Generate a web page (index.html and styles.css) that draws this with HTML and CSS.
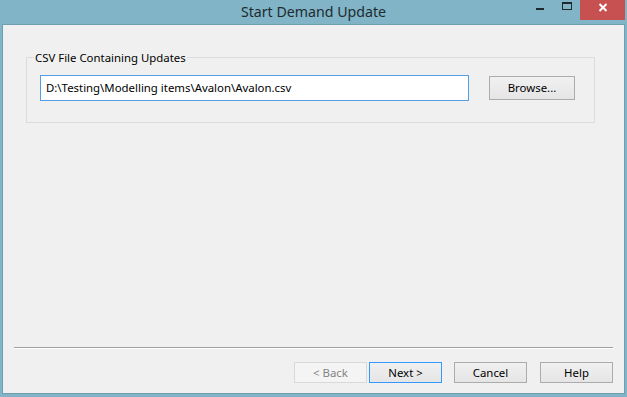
FILE: index.html
```html
<!DOCTYPE html>
<html>
<head>
<meta charset="utf-8">
<title>Start Demand Update</title>
<link rel="stylesheet" href="styles.css">
</head>
<body>
<div class="window">
  <div class="titlebar">
    <div class="title">Start Demand Update</div>
    <div class="controls">
      <div class="ctl min"><svg width="27" height="20" viewBox="0 0 27 20"><rect x="9" y="8" width="8" height="2" fill="#1e2a2e"/></svg></div>
      <div class="ctl max"><svg width="26" height="20" viewBox="0 0 26 20"><rect x="8" y="2" width="10" height="2" fill="#1e2a2e"/><rect x="8.5" y="3.5" width="9" height="6" fill="none" stroke="#1e2a2e" stroke-width="1"/></svg></div>
      <div class="ctl close"><svg width="45" height="20" viewBox="0 0 45 20"><path d="M19.5 4 L26.5 11 M26.5 4 L19.5 11" stroke="#fff" stroke-width="2" fill="none"/></svg></div>
    </div>
  </div>
  <div class="client">
    <div class="group">
      <span class="legend">CSV File Containing Updates</span>
      <div class="row">
        <div class="input">D:\Testing\Modelling items\Avalon\Avalon.csv</div>
        <div class="btn browse">Browse...</div>
      </div>
    </div>
    <div class="spacer"></div>
    <div class="sep"></div>
    <div class="buttons">
      <div class="btn disabled">&lt; Back</div>
      <div class="btn default next">Next &gt;</div>
      <div class="btn cancel">Cancel</div>
      <div class="btn help">Help</div>
    </div>
  </div>
</div>
</body>
</html>
```

FILE: styles.css
```css
* { box-sizing: border-box; }
html, body { margin: 0; padding: 0; }
body {
  font-family: "Noto Sans", "Open Sans", sans-serif;
  font-size: 11.4px;
  color: #000;
  background: #80b4c6;
}
.window {
  width: 627px;
  height: 397px;
  background: #80b4c6;
  padding: 0 2px 3px 2px;
  display: flex;
  flex-direction: column;
}
.titlebar {
  height: 24px;
  display: grid;
  grid-template-columns: 1fr auto 1fr;
  align-items: start;
}
.title {
  grid-column: 2;
  font-size: 14.2px;
  line-height: 24px;
  color: #1f2b30;
  white-space: nowrap;
}
.controls {
  grid-column: 3;
  justify-self: end;
  display: flex;
  align-items: flex-start;
}
.ctl { height: 20px; }
.ctl svg { display: block; }
.close { background: #c75050; width: 45px; }
.client {
  flex: 1;
  background: #f0f0f0;
  border: 1px solid #6e9fb1;
  display: flex;
  flex-direction: column;
}
.group {
  position: relative;
  margin: 32px 0 0 23px;
  width: 569px;
  height: 66px;
  border: 1px solid #dcdcdc;
  padding: 17px 0 0 13px;
}
.legend {
  position: absolute;
  top: -8px;
  left: 7px;
  padding: 0 1px;
  line-height: 15px;
  background: #f0f0f0;
}
.row {
  display: flex;
  align-items: center;
}
.input {
  width: 429px;
  height: 26px;
  border: 1px solid #569de5;
  background: #fff;
  padding-left: 5px;
  line-height: 24px;
  white-space: nowrap;
}
.btn {
  width: 73px;
  height: 21px;
  border: 1px solid #acacac;
  background: linear-gradient(#f0f0f0, #e5e5e5);
  text-align: center;
  line-height: 19px;
  white-space: nowrap;
}
.browse {
  width: 86px;
  height: 24px;
  line-height: 22px;
  margin-left: 20px;
}
.spacer { flex: 1; }
.sep {
  margin: 0 11px;
  height: 2px;
  border-top: 1px solid #a0a0a0;
  border-bottom: 1px solid #ffffff;
}
.buttons {
  margin: 13px 11px 10px 11px;
  display: flex;
  justify-content: flex-end;
}
.disabled {
  border-color: #d9d9d9;
  background: #f4f4f4;
  color: #838383;
}
.default { border-color: #3399ff; margin-left: 2px; }
.cancel { margin-left: 12px; }
.help { margin-left: 13px; }
```
